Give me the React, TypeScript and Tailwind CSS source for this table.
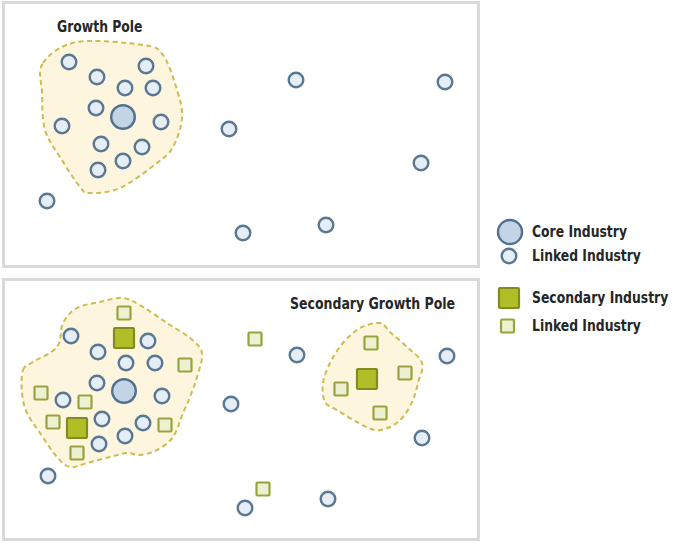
import React from "react";

type P = [number, number];

// closed catmull-rom curve through points
const smooth = (pts: P[]) => {
  const n = pts.length;
  let d = `M${pts[0][0]},${pts[0][1]}`;
  for (let i = 0; i < n; i++) {
    const p0 = pts[(i - 1 + n) % n];
    const p1 = pts[i];
    const p2 = pts[(i + 1) % n];
    const p3 = pts[(i + 2) % n];
    const c1x = p1[0] + (p2[0] - p0[0]) / 6;
    const c1y = p1[1] + (p2[1] - p0[1]) / 6;
    const c2x = p2[0] - (p3[0] - p1[0]) / 6;
    const c2y = p2[1] - (p3[1] - p1[1]) / 6;
    d += ` C${c1x},${c1y} ${c2x},${c2y} ${p2[0]},${p2[1]}`;
  }
  return d + "Z";
};

const topBlob: P[] = [
  [43, 63], [77, 42], [143, 45], [163, 55], [177, 90], [182, 118], [173, 147],
  [157, 163], [120, 188], [90, 193], [80, 187], [60, 157], [45, 130], [42, 93],
];

const bottomBlob: P[] = [
  [23, 370], [33, 362], [57, 347], [63, 323], [77, 308], [100, 302], [123, 298],
  [143, 307], [167, 323], [190, 338], [202, 353], [197, 377], [190, 397], [183, 413],
  [173, 437], [157, 450], [140, 455], [127, 453], [110, 457], [87, 463], [70, 467],
  [57, 457], [40, 433], [27, 413], [22, 393],
];

const secondBlob: P[] = [
  [323, 383], [330, 363], [343, 343], [360, 328], [380, 323], [390, 332], [407, 347],
  [422, 363], [418, 383], [413, 400], [403, 417], [390, 427], [375, 430], [357, 422],
  [337, 410], [325, 402],
];

const topLinked: P[] = [
  [69, 62], [97, 77], [146, 66], [125, 88], [153, 88], [96, 108], [62, 126], [161, 122],
  [101, 144], [142, 147], [123, 161], [98, 170], [47, 201], [229, 129], [296, 80],
  [445, 82], [421, 163], [243, 233], [326, 225],
];

const bottomLinked: P[] = [
  [71, 336], [98, 352], [148, 341], [126, 363], [155, 363], [97, 383], [63, 400],
  [162, 396], [102, 419], [143, 423], [125, 436], [99, 444], [48, 476], [231, 404],
  [297, 355], [447, 356], [422, 438], [328, 499], [245, 508],
];

const smallSq: P[] = [
  [124, 313], [185, 365], [41, 393], [85, 402], [53, 422], [165, 425], [77, 453],
  [255, 339], [371, 343], [405, 373], [341, 389], [380, 413], [263, 489],
];

const bigSq: P[] = [[124, 338], [77, 428], [367, 379]];

const Linked = ({ x, y }: { x: number; y: number }) => (
  <circle cx={x} cy={y} r={7.3} fill="#e5edf6" stroke="#5b7893" strokeWidth={2.4} />
);
const Core = ({ x, y }: { x: number; y: number }) => (
  <circle cx={x} cy={y} r={11.8} fill="#c4d4e7" stroke="#52718f" strokeWidth={2.4} />
);
const SmallSquare = ({ x, y }: { x: number; y: number }) => (
  <rect x={x - 6.5} y={y - 6.5} width={13} height={13} rx={1} fill="#eef0d2" stroke="#97a33c" strokeWidth={2.2} />
);
const BigSquare = ({ x, y }: { x: number; y: number }) => (
  <rect x={x - 10} y={y - 10} width={20} height={20} rx={1} fill="#b2be28" stroke="#7f8d1f" strokeWidth={2.2} />
);

const Blob = ({ pts }: { pts: P[] }) => (
  <path d={smooth(pts)} fill="#fdf5dd" stroke="#cbbd4f" strokeWidth={2} strokeDasharray="5 3.5" />
);

const labelFont = "font-['Liberation_Sans_Narrow','DejaVu_Sans_Condensed',sans-serif] font-bold text-[#262626]";

export default function App() {
  return (
    <div className={`w-[684px] h-[544px] bg-white flex ${labelFont}`}>
      <div className="flex flex-col gap-[10px] pl-[2px] pt-[1px]">
        <div className="relative w-[478px] h-[267px] border-[3px] border-[#d9d9d9]">
          <svg className="absolute inset-0" width={472} height={261} viewBox="5 4 472 261">
            <Blob pts={topBlob} />
            {topLinked.map(([x, y], i) => (
              <Linked key={i} x={x} y={y} />
            ))}
            <Core x={123} y={117} />
          </svg>
          <span className="absolute left-[52px] top-[15px] text-[16px] leading-none origin-left scale-x-[0.86] whitespace-nowrap">
            Growth Pole
          </span>
        </div>
        <div className="relative w-[478px] h-[263px] border-[3px] border-[#d9d9d9]">
          <svg className="absolute inset-0" width={472} height={257} viewBox="5 281 472 257">
            <Blob pts={bottomBlob} />
            <Blob pts={secondBlob} />
            {bottomLinked.map(([x, y], i) => (
              <Linked key={i} x={x} y={y} />
            ))}
            {smallSq.map(([x, y], i) => (
              <SmallSquare key={i} x={x} y={y} />
            ))}
            {bigSq.map(([x, y], i) => (
              <BigSquare key={i} x={x} y={y} />
            ))}
            <Core x={124} y={391} />
          </svg>
          <span className="absolute left-[285px] top-[15px] text-[16px] leading-none origin-left scale-x-[0.87] whitespace-nowrap">
            Secondary Growth Pole
          </span>
        </div>
      </div>

      <div className="flex flex-col pl-[16px] pt-[218px] text-[16px] leading-none">
        <div className="flex items-center gap-[8px] h-[28px]">
          <svg width={28} height={28} viewBox="0 0 28 28">
            <circle cx={14} cy={14} r={12} fill="#c4d4e7" stroke="#52718f" strokeWidth={2.4} />
          </svg>
          <span className="origin-left scale-x-[0.86] whitespace-nowrap">Core Industry</span>
        </div>
        <div className="flex items-center gap-[8px] h-[20px]">
          <svg width={28} height={20} viewBox="0 0 28 20">
            <circle cx={13} cy={10} r={7.3} fill="#e5edf6" stroke="#5b7893" strokeWidth={2.4} />
          </svg>
          <span className="origin-left scale-x-[0.86] whitespace-nowrap">Linked Industry</span>
        </div>
        <div className="flex items-center gap-[8px] h-[24px] mt-[20px]">
          <svg width={28} height={24} viewBox="0 0 28 24">
            <rect x={3} y={2} width={20} height={20} rx={1} fill="#b2be28" stroke="#7f8d1f" strokeWidth={2.2} />
          </svg>
          <span className="origin-left scale-x-[0.86] whitespace-nowrap">Secondary Industry</span>
        </div>
        <div className="flex items-center gap-[8px] h-[24px] mt-[4px]">
          <svg width={28} height={20} viewBox="0 0 28 20">
            <rect x={5} y={3.5} width={13} height={13} rx={1} fill="#eef0d2" stroke="#97a33c" strokeWidth={2.2} />
          </svg>
          <span className="origin-left scale-x-[0.86] whitespace-nowrap">Linked Industry</span>
        </div>
      </div>
    </div>
  );
}
